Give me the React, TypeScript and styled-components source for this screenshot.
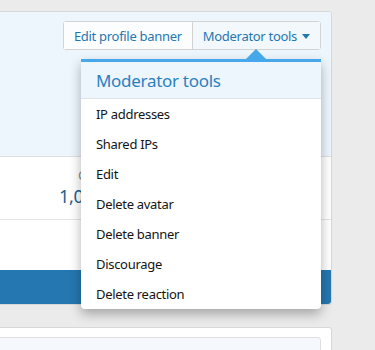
import React from "react";
import styled, { createGlobalStyle } from "styled-components";

const GlobalStyle = createGlobalStyle`
  body {
    margin: 0;
    background: #ebebeb;
    font-family: "Noto Sans", "Open Sans", sans-serif;
    letter-spacing: -0.3px;
    color: #141414;
  }
`;

const Page = styled.div`
  padding: 11px 43px 0 0;
  overflow: hidden;
  height: 350px;
  box-sizing: border-box;
`;

const Block = styled.div`
  margin-left: -4px;
  background: #fff;
  border: 1px solid #d8d8d8;
  border-radius: 3px;
`;

const Banner = styled.div`
  height: 145px;
  background: #edf5fd;
  border-bottom: 1px solid #dfdfdf;
  border-radius: 3px 3px 0 0;
  display: flex;
  justify-content: flex-end;
  align-items: flex-start;
  padding: 9px 10px 0 0;
  box-sizing: border-box;
`;

const ButtonGroup = styled.div`
  position: relative;
  display: flex;
  border: 1px solid #d3d3d3;
  border-radius: 3px;
  background: #f8fbfe;
`;

const Button = styled.div<{ $divider?: boolean }>`
  height: 27px;
  display: flex;
  align-items: center;
  padding: 0 10px;
  font-size: 13px;
  color: #2577b1;
  border-left: ${(p) => (p.$divider ? "1px solid #d3d3d3" : "none")};
  background: ${(p) => (p.$divider ? "#f3f8fd" : "#fcfdff")};
`;

const Caret = styled.span`
  display: inline-block;
  margin-left: 5px;
  border-left: 4px solid transparent;
  border-right: 4px solid transparent;
  border-top: 5px solid #2577b1;
  margin-top: 1px;
`;

const Menu = styled.div`
  position: absolute;
  top: 37px;
  right: -1px;
  width: 240px;
  background: #fff;
  border-top: 3px solid #47a7eb;
  border-radius: 0 0 4px 4px;
  box-shadow: 0 5px 12px rgba(0, 0, 0, 0.3);
  z-index: 5;

  &::before {
    content: "";
    position: absolute;
    top: -13px;
    left: 165px;
    border-left: 10px solid transparent;
    border-right: 10px solid transparent;
    border-bottom: 10px solid #47a7eb;
  }
`;

const MenuHeader = styled.div`
  background: #edf5fd;
  border-bottom: 1px solid #dfe4ea;
  color: #2b81c0;
  font-size: 17px;
  height: 37px;
  display: flex;
  align-items: center;
  padding: 0 15px;
  box-sizing: border-box;
`;

const MenuItem = styled.div`
  height: 30px;
  display: flex;
  align-items: center;
  padding: 0 15px;
  font-size: 13px;
  color: #141414;
`;

const Stats = styled.div`
  height: 62px;
  border-bottom: 1px solid #e5e5e5;
  display: flex;
  align-items: center;
  padding-left: 62px;
`;

const Stat = styled.dl`
  margin: -2px 0 0;
  text-align: center;
`;

const StatLabel = styled.dt`
  font-size: 13px;
  color: #8c8c8c;
  line-height: 18px;
`;

const StatValue = styled.dd`
  margin: 0;
  font-size: 18px;
  color: #1d5f8f;
  line-height: 24px;
`;

const Spacer = styled.div`
  height: 50px;
`;

const TabBar = styled.div`
  height: 34px;
  background: #2577b1;
  border-radius: 0 0 3px 3px;
`;

const NextBlock = styled.div`
  margin: 22px 0 0 -4px;
  background: #fff;
  border: 1px solid #d8d8d8;
  border-radius: 3px;
  padding: 9px 10px 0 0;
  height: 40px;
`;

const InnerBox = styled.div`
  margin-left: -4px;
  height: 40px;
  background: #f5f9fd;
  border: 1px solid #dfdfdf;
  border-radius: 3px;
`;

const items = [
  "IP addresses",
  "Shared IPs",
  "Edit",
  "Delete avatar",
  "Delete banner",
  "Discourage",
  "Delete reaction",
];

export default function App() {
  return (
    <>
      <GlobalStyle />
      <Page>
        <Block>
          <Banner>
            <ButtonGroup>
              <Button>Edit profile banner</Button>
              <Button $divider>
                Moderator tools
                <Caret />
              </Button>
              <Menu>
                <MenuHeader>Moderator tools</MenuHeader>
                {items.map((item) => (
                  <MenuItem key={item}>{item}</MenuItem>
                ))}
              </Menu>
            </ButtonGroup>
          </Banner>
          <Stats>
            <Stat>
              <StatLabel>Credits</StatLabel>
              <StatValue>1,000,000</StatValue>
            </Stat>
          </Stats>
          <Spacer />
          <TabBar />
        </Block>
        <NextBlock>
          <InnerBox />
        </NextBlock>
      </Page>
    </>
  );
}
